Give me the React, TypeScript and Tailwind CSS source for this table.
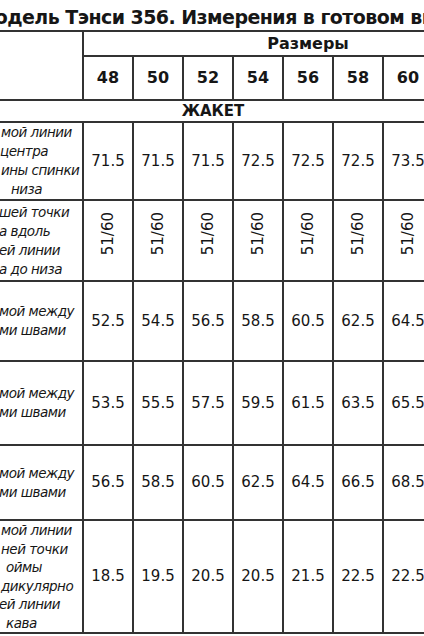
const sizes = [48, 50, 52, 54, 56, 58, 60, 62, 64];

type Line = [string, string];

const rows: { h: string; lead: string; label: Line[]; values: string[]; rotated?: boolean }[] = [
  {
    h: "h-[75px]",
    lead: "leading-[19px]",
    label: [
      ["мой линии", "ml-[2px]"],
      ["центра", "ml-[1px]"],
      ["ины спинки", "ml-[2px]"],
      ["низа", "ml-[12px]"],
    ],
    values: ["71.5", "71.5", "71.5", "72.5", "72.5", "72.5", "73.5", "73.5", "73.5"],
  },
  {
    h: "h-[81px]",
    lead: "leading-[19px]",
    label: [
      ["шей точки", "ml-[0px]"],
      ["а вдоль", "ml-[0px]"],
      ["ей линии", "ml-[0px]"],
      ["а до низа", "ml-[0px]"],
    ],
    values: ["51/60", "51/60", "51/60", "51/60", "51/60", "51/60", "51/60", "51/60", "51/60"],
    rotated: true,
  },
  {
    h: "h-[80px]",
    lead: "leading-[19px]",
    label: [
      ["мой между", "ml-[0px]"],
      ["ми швами", "ml-[0px]"],
    ],
    values: ["52.5", "54.5", "56.5", "58.5", "60.5", "62.5", "64.5", "66.5", "68.5"],
  },
  {
    h: "h-[84px]",
    lead: "leading-[19px]",
    label: [
      ["мой между", "ml-[0px]"],
      ["ми швами", "ml-[0px]"],
    ],
    values: ["53.5", "55.5", "57.5", "59.5", "61.5", "63.5", "65.5", "67.5", "69.5"],
  },
  {
    h: "h-[75px]",
    lead: "leading-[19px]",
    label: [
      ["мой между", "ml-[0px]"],
      ["ми швами", "ml-[0px]"],
    ],
    values: ["56.5", "58.5", "60.5", "62.5", "64.5", "66.5", "68.5", "70.5", "72.5"],
  },
  {
    h: "h-[113px]",
    lead: "leading-[18.5px]",
    label: [
      ["мой линии", "ml-[2px]"],
      ["ней точки", "ml-[2px]"],
      ["оймы", "ml-[7px]"],
      ["дикулярно", "ml-[2px]"],
      ["ей линии", "ml-[0px]"],
      ["кава", "ml-[7px]"],
    ],
    values: ["18.5", "19.5", "20.5", "20.5", "21.5", "22.5", "22.5", "23.5", "23.5"],
  },
];

const cell = "border-2 border-[#333] p-0";

export default function App() {
  return (
    <div className="w-[424px] h-[636px] overflow-hidden bg-white text-[#161616] font-['DejaVu_Sans',Verdana,sans-serif]">
      {/* left part of the sheet is cut off in the picture */}
      <div className="w-[640px] ml-[-108px]">
        <div className="h-[30px] pt-[4px] pl-[14px] flex items-center justify-center whitespace-nowrap text-[19px] font-bold tracking-[-0.55px]">
          Модель Тэнси 356. Измерения в готовом виде
        </div>
        <table className="w-[640px] table-fixed border-collapse">
          <colgroup>
            <col className="w-[190px]" />
            {sizes.map((s) => (
              <col key={s} className="w-[50px]" />
            ))}
          </colgroup>
          <tbody>
            <tr className="h-[25px]">
              <td rowSpan={2} className={cell} />
              <td colSpan={9} className={`${cell} text-center font-bold text-[16px] leading-none`}>
                Размеры
              </td>
            </tr>
            <tr className="h-[44px]">
              {sizes.map((s) => (
                <td key={s} className={`${cell} text-center font-bold text-[16px]`}>
                  {s}
                </td>
              ))}
            </tr>
            <tr className="h-[22px]">
              <td colSpan={10} className={`${cell} text-center font-bold text-[15px] leading-none`}>
                ЖАКЕТ
              </td>
            </tr>
            {rows.map((r, i) => (
              <tr key={i} className={r.h}>
                <td className={`${cell} pl-[105px] overflow-hidden italic text-[13.5px] tracking-[-0.5px] whitespace-nowrap ${r.lead}`}>
                  {r.label.map(([t, ml], j) => (
                    <div key={j} className={ml}>
                      {t}
                    </div>
                  ))}
                </td>
                {r.values.map((v, j) => (
                  <td key={j} className={`${cell} text-center text-[15px] overflow-hidden`}>
                    {r.rotated ? (
                      <div className="flex justify-center pb-[14px]">
                        <span className="[writing-mode:vertical-rl] rotate-180">{v}</span>
                      </div>
                    ) : (
                      v
                    )}
                  </td>
                ))}
              </tr>
            ))}
          </tbody>
        </table>
      </div>
    </div>
  );
}
